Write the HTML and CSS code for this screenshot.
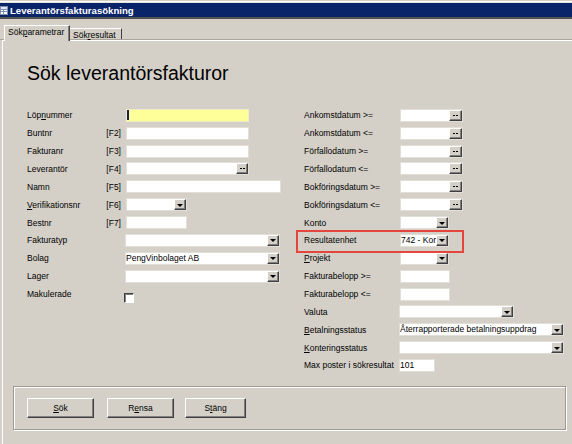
FILE: index.html
```html
<!DOCTYPE html>
<html lang="sv">
<head>
  <meta charset="UTF-8" />
  <meta name="viewport" content="width=device-width, initial-scale=1" />
  <title>Leverantörsfakturasökning</title>
  <link rel="stylesheet" href="styles.css">
</head>
<body>
  <div class="frame-top"></div>
  <div class="titlebar">
    <svg class="appicon" width="8" height="9" viewBox="0 0 8 9">
      <rect x="0" y="0" width="8" height="9" fill="#7f8db0"/>
      <rect x="1" y="1" width="6" height="2" fill="#dfe6f4"/>
      <rect x="1" y="4" width="2" height="1" fill="#ffffff"/>
      <rect x="4" y="4" width="3" height="1" fill="#ffffff"/>
      <rect x="1" y="6" width="2" height="2" fill="#ffffff"/>
      <rect x="4" y="6" width="3" height="2" fill="#ffffff"/>
    </svg>
    <span>Leverantörsfakturasökning</span>
  </div>

  <div class="tabs">
    <div class="tab active">Sök<u>p</u>arametrar</div>
    <div class="tab">Sök<u>r</u>esultat</div>
  </div>

  <div class="panel">
    <h1 class="heading">Sök leverantörsfakturor</h1>

    <div class="form">
      <div class="col col-left">
        <div class="row"><span class="lbl">Löp<u>n</u>ummer</span><span class="fk"></span><span class="field w123 focus"><span class="caret"></span></span></div>
        <div class="row"><span class="lbl">Buntnr</span><span class="fk">[F2]</span><span class="field w123"></span></div>
        <div class="row"><span class="lbl">Fakturanr</span><span class="fk">[F3]</span><span class="field w123"></span></div>
        <div class="row"><span class="lbl">Leverantör</span><span class="fk">[F4]</span><span class="field w123"><span class="btn-mini dots"></span></span></div>
        <div class="row"><span class="lbl">Namn</span><span class="fk">[F5]</span><span class="field w155"></span></div>
        <div class="row"><span class="lbl"><u>V</u>erifikationsnr</span><span class="fk">[F6]</span><span class="field w61"><span class="btn-mini drop"></span></span></div>
        <div class="row"><span class="lbl">Bestnr</span><span class="fk">[F7]</span><span class="field w61"></span></div>
        <div class="row"><span class="lbl">Fakturatyp</span><span class="fk"></span><span class="field w154 shift"><span class="btn-mini drop"></span></span></div>
        <div class="row"><span class="lbl">Bolag</span><span class="fk"></span><span class="field w154 shift"><span class="val">PengVinbolaget AB</span><span class="btn-mini drop"></span></span></div>
        <div class="row"><span class="lbl">Lager</span><span class="fk"></span><span class="field w154 shift"><span class="btn-mini drop"></span></span></div>
        <div class="row"><span class="lbl">Makulerade</span><span class="fk"></span><span class="chk"></span></div>
      </div>

      <div class="col col-right">
        <div class="row"><span class="lbl">Ankomstdatum &gt;=</span><span class="field w63"><span class="btn-mini dots wide"></span></span></div>
        <div class="row"><span class="lbl">Ankomstdatum &lt;=</span><span class="field w63"><span class="btn-mini dots wide"></span></span></div>
        <div class="row"><span class="lbl">Förfallodatum &gt;=</span><span class="field w63"><span class="btn-mini dots wide"></span></span></div>
        <div class="row"><span class="lbl">Förfallodatum &lt;=</span><span class="field w63"><span class="btn-mini dots wide"></span></span></div>
        <div class="row"><span class="lbl">Bokföringsdatum &gt;=</span><span class="field w63"><span class="btn-mini dots wide"></span></span></div>
        <div class="row"><span class="lbl">Bokföringsdatum &lt;=</span><span class="field w63"><span class="btn-mini dots wide"></span></span></div>
        <div class="row"><span class="lbl">Konto</span><span class="field w49"><span class="btn-mini drop"></span></span></div>
        <div class="row marked"><span class="lbl">Resultatenhet</span><span class="field w49"><span class="val">742 - Kor</span><span class="btn-mini drop"></span></span></div>
        <div class="row"><span class="lbl"><u>P</u>rojekt</span><span class="field w49"><span class="btn-mini drop"></span></span></div>
        <div class="row"><span class="lbl">Fakturabelopp &gt;=</span><span class="field w50"></span></div>
        <div class="row"><span class="lbl">Fakturabelopp &lt;=</span><span class="field w50"></span></div>
        <div class="row"><span class="lbl">Valuta</span><span class="field w114 shift"><span class="btn-mini drop"></span></span></div>
        <div class="row"><span class="lbl"><u>B</u>etalningsstatus</span><span class="field w164 shift"><span class="val">Återrapporterade betalningsuppdrag</span><span class="btn-mini drop"></span></span></div>
        <div class="row"><span class="lbl"><u>K</u>onteringsstatus</span><span class="field w164 shift"><span class="btn-mini drop"></span></span></div>
        <div class="row"><span class="lbl">Max poster i sökresultat</span><span class="field w35 shift"><span class="val">101</span></span></div>
      </div>
    </div>

    <div class="btnbox">
      <button class="btn"><u>S</u>ök</button>
      <button class="btn btn-rensa">R<u>e</u>nsa</button>
      <button class="btn btn-stang">S<u>t</u>äng</button>
    </div>
  </div>
</body>
</html>
```

FILE: styles.css
```css
body {
  margin: 0;
  background: #d4d0c8;
  overflow: hidden;
  font-family: "Liberation Sans", Arial, sans-serif;
  font-size: 8.5px;
  color: #000;
}

u {
  text-decoration: underline;
  text-underline-offset: 1px;
}

.frame-top {
  height: 3px;
  background: linear-gradient(#d4d0c8 0 1px, #ffffff 1px 2px, #e6e3dd 2px);
}

.titlebar {
  height: 14px;
  background: #0a246a;
  border-bottom: 2px solid #55534f;
  color: #fff;
  font-weight: bold;
  font-size: 9.6px;
  display: flex;
  align-items: center;
  gap: 2px;
}

.appicon {
  display: block;
}

.tabs {
  height: 21px;
  box-sizing: border-box;
  border-bottom: 1px solid #a9a59d;
  display: flex;
  align-items: flex-end;
  padding-left: 4px;
}

.tab {
  box-sizing: border-box;
  height: 11px;
  width: 52px;
  padding: 1px 0 0 3px;
  line-height: 10px;
  border-top: 1px solid #fff;
  border-right: 1px solid #404040;
  white-space: nowrap;
}

.tab.active {
  position: relative;
  z-index: 1;
  height: 16px;
  width: 66px;
  margin-bottom: -2px;
  padding-left: 3px;
  border-left: 1px solid #fff;
  background: #d4d0c8;
  box-shadow: inset -1px 0 0 #808080;
}

.panel {
  margin-left: 2px;
  border-left: 1px solid #fff;
  border-top: 1px solid #fff;
  padding-left: 10px;
  height: 410px;
}

.heading {
  margin: 21.3px 0 0 14px;
  font-size: 19.5px;
  line-height: 22px;
  font-weight: normal;
}

.form {
  display: flex;
  margin: 22.2px 0 0 14px;
}

.col-left {
  width: 277px;
}

.row {
  height: 17.86px;
  display: flex;
  align-items: center;
  white-space: nowrap;
}

.col-left .lbl {
  width: 78px;
}

.col-right .lbl {
  width: 96px;
}

.fk {
  width: 16px;
  text-align: right;
  margin-right: 5px;
}

.field {
  box-sizing: border-box;
  height: 13px;
  background: #fff;
  border: 1px solid #e2dfd8;
  display: flex;
  align-items: center;
  line-height: 11px;
  overflow: hidden;
}

.field.focus {
  background: #ffff99;
  border-color: #eeeec0;
}

.field.shift {
  margin-left: -1px;
}

.caret {
  width: 2px;
  height: 10px;
  background: #1c1c5c;
}

.val {
  padding-left: 0;
}

.w123 { width: 123px; }
.w155 { width: 155px; }
.w61  { width: 61px; }
.w154 { width: 155px; }
.w63  { width: 63px; }
.w49  { width: 49px; }
.w50  { width: 50px; }
.w114 { width: 115px; }
.w164 { width: 165px; }
.w35  { width: 36px; }

.btn-mini {
  box-sizing: border-box;
  margin-left: auto;
  width: 12px;
  height: 11px;
  flex: none;
  background: #d4d0c8;
  border: 1px solid;
  border-color: #fff #404040 #404040 #fff;
  box-shadow: inset -1px -1px 0 #808080;
  display: flex;
  align-items: center;
  justify-content: center;
}

.btn-mini.wide {
  width: 13px;
}

.drop::after {
  content: "";
  width: 0;
  height: 0;
  border-left: 3px solid transparent;
  border-right: 3px solid transparent;
  border-top: 3px solid #000;
  margin-top: 1px;
}

.dots::after {
  content: "";
  width: 2px;
  height: 1px;
  background: #000;
  box-shadow: 3px 0 0 #000;
  margin-right: 3px;
}

.chk {
  box-sizing: border-box;
  align-self: flex-start;
  margin: 8px 0 0 -2px;
  width: 10px;
  height: 10px;
  background: #fff;
  border: 1px solid;
  border-color: #404040 #fff #fff #404040;
  box-shadow: inset 1px 1px 0 #808080;
}

.row.marked {
  position: relative;
}

.row.marked::after {
  content: "";
  position: absolute;
  left: -8px;
  top: -1.5px;
  width: 168px;
  height: 23px;
  box-sizing: border-box;
  border: 2px solid #e4463e;
}

.btnbox {
  box-sizing: border-box;
  margin-top: 11.6px;
  width: 553px;
  height: 44px;
  border: 1px solid #9d9a93;
  box-shadow: inset 1px 1px 0 #fff, 1px 1px 0 #fff;
  padding: 11px 0 0 13px;
  display: flex;
  align-items: flex-start;
}

.btn {
  box-sizing: border-box;
  width: 67px;
  height: 20px;
  padding: 0;
  background: #d4d0c8;
  border: 1px solid;
  border-color: #fff #404040 #404040 #fff;
  box-shadow: inset -1px -1px 0 #808080;
  font-family: inherit;
  font-size: 8.5px;
  color: #000;
}

.btn-rensa {
  margin-left: 13px;
}

.btn-stang {
  width: 61px;
  margin-left: 11px;
}
```
